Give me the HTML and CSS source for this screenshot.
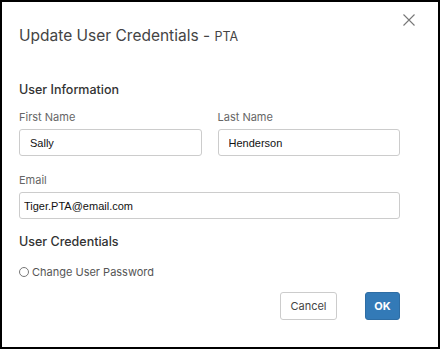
FILE: index.html
```html
<!DOCTYPE html>
<html lang="en">
<head>
  <meta charset="UTF-8">
  <title>Update User Credentials</title>
  <link rel="stylesheet" href="styles.css">
</head>
<body>
  <div class="dialog">
    <div class="dialog-header">
      <h1>Update User Credentials - <span class="scope">PTA</span></h1>
      <button class="close-btn" aria-label="Close">
        <svg width="12" height="12" viewBox="0 0 12 12">
          <path d="M0.5 0.5 L11.5 11.5 M11.5 0.5 L0.5 11.5" stroke="#777" stroke-width="1.1" fill="none"/>
        </svg>
      </button>
    </div>

    <h2>User Information</h2>
    <div class="row">
      <div class="field">
        <label>First Name</label>
        <input type="text" class="pad-10" value="Sally">
      </div>
      <div class="field">
        <label>Last Name</label>
        <input type="text" class="pad-10" value="Henderson">
      </div>
    </div>
    <div class="field field-email">
      <label>Email</label>
      <input type="text" class="pad-4" value="Tiger.PTA@email.com">
    </div>

    <h2 class="credentials">User Credentials</h2>
    <label class="radio"><span class="radio-dot"></span>Change User Password</label>

    <div class="actions">
      <button class="btn btn-cancel">Cancel</button>
      <button class="btn btn-ok">OK</button>
    </div>
  </div>
</body>
</html>
```

FILE: styles.css
```css
body {
  margin: 0;
  background: #fff;
  font-family: Inter, "Noto Sans", sans-serif;
  color: #333;
}
.dialog {
  box-sizing: border-box;
  width: 440px;
  height: 349px;
  border: 2px solid #000;
  padding: 0 38px 0 17px;
}
.dialog-header {
  display: flex;
  justify-content: space-between;
  align-items: flex-start;
  height: 70px;
}
h1 {
  margin: 24px 0 0;
  font-size: 15.5px;
  font-weight: 400;
  color: #444;
}
.scope {
  font-size: 12.5px;
}
.close-btn {
  background: none;
  border: none;
  padding: 0;
  margin: 12px -15px 0 0;
  cursor: pointer;
}
h2 {
  margin: 10px 0 0;
  font-size: 12.5px;
  font-weight: 500;
  color: #333;
}
.row {
  display: flex;
  gap: 16px;
}
.row .field {
  flex: 1;
}
.field label {
  display: block;
  margin: 13px 0 5px;
  font-size: 11px;
  color: #666;
}
.field-email label {
  margin-top: 17px;
}
.field input {
  box-sizing: border-box;
  width: 100%;
  height: 27px;
  border: 1px solid #ccc;
  border-radius: 3px;
  font-family: "Liberation Sans", Arial, sans-serif;
  font-size: 11px;
  color: #111;
}
.pad-10 { padding: 0 0 0 10px; }
.pad-4 { padding: 0 0 0 4px; }
.credentials {
  margin-top: 15px;
}
.radio {
  display: flex;
  align-items: center;
  margin-top: 16px;
  font-size: 11px;
  color: #555;
}
.radio-dot {
  width: 8px;
  height: 8px;
  border: 1px solid #777;
  border-radius: 50%;
  margin-right: 3px;
}
.actions {
  display: flex;
  justify-content: flex-end;
  gap: 28px;
  margin-top: 13px;
}
.btn {
  height: 28px;
  border-radius: 3px;
  font-family: Inter, "Noto Sans", sans-serif;
  font-size: 11px;
  cursor: pointer;
}
.btn-cancel {
  width: 57px;
  background: #fff;
  border: 1px solid #ccc;
  color: #444;
}
.btn-ok {
  width: 35px;
  background: #337ab7;
  border: 1px solid #2e6da4;
  color: #fff;
  font-weight: 700;
}
```
